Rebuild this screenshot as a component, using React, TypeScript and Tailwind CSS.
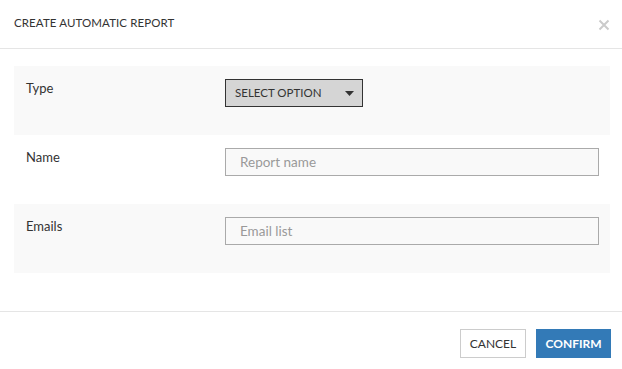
import React from 'react';

const Row: React.FC<{ label: string; shaded?: boolean; children: React.ReactNode }> = ({ label, shaded, children }) => (
  <div className={`flex h-[69px] pt-[13px] pl-3 pr-[11px] ${shaded ? 'bg-[#f9f9f9]' : 'bg-white'}`}>
    <div className="w-[199px] shrink-0 text-[13px] leading-[18px] text-[#333]">{label}</div>
    <div className="flex-1">{children}</div>
  </div>
);

export default function App() {
  return (
    <div className="w-[622px] h-[369px] bg-white font-['Lato','Open_Sans',sans-serif] text-[#333]">
      {/* Header */}
      <div className="flex h-[49px] items-center justify-between border-b border-[#e5e5e5] pl-[14px] pr-[12px]">
        <span className="text-[11.5px] tracking-[0.1px] pb-[2px]">CREATE AUTOMATIC REPORT</span>
        <svg width="12" height="12" viewBox="0 0 12 12" className="mt-[2px]">
          <path d="M1.5 1.5L10.5 10.5M10.5 1.5L1.5 10.5" stroke="#cbcbcb" strokeWidth="2" />
        </svg>
      </div>

      {/* Body */}
      <div className="pl-[14px] pr-[12px] pt-[17px] pb-[38px]">
        <Row label="Type" shaded>
          <button className="flex h-[28px] w-[138px] items-center justify-between border border-[#333] bg-[#d5d5d5] pl-[9px] pr-[8px] text-[11.5px] text-[#333]">
            <span>SELECT OPTION</span>
            <svg width="9" height="5" viewBox="0 0 9 5"><path d="M0 0h9L4.5 5z" fill="#333" /></svg>
          </button>
        </Row>
        <Row label="Name">
          <input
            placeholder="Report name"
            className="h-[28px] w-[374px] border border-[#aaa] bg-[#f9f9f9] px-[14px] text-[13.5px] placeholder:text-[#999] outline-none"
          />
        </Row>
        <Row label="Emails" shaded>
          <input
            placeholder="Email list"
            className="h-[28px] w-[374px] border border-[#aaa] bg-[#f9f9f9] px-[14px] text-[13.5px] placeholder:text-[#999] outline-none"
          />
        </Row>
      </div>

      {/* Footer */}
      <div className="flex justify-end gap-[10px] border-t border-[#e5e5e5] pt-[17px] pr-[11px]">
        <button className="h-[29px] w-[66px] border border-[#ccc] bg-white text-[12px] text-[#333]">CANCEL</button>
        <button className="h-[29px] w-[75px] bg-[#337ab7] text-[12px] font-bold text-white">CONFIRM</button>
      </div>
    </div>
  );
}
